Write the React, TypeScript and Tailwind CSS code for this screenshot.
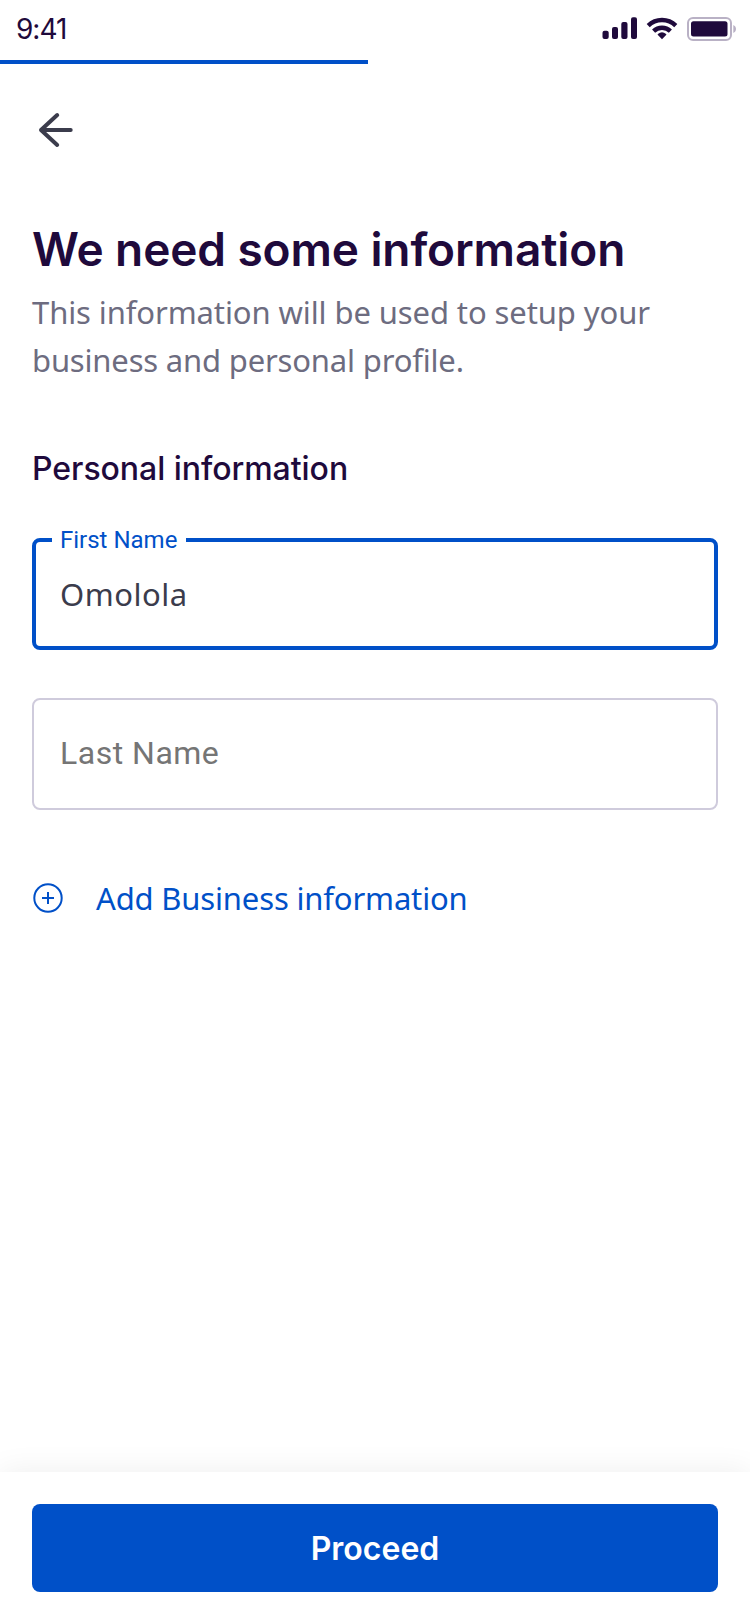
function StatusIcons() {
  return (
    <svg width="160" height="60" viewBox="590 0 160 60" fill="#1f0a3c">
      <rect x="602.5" y="30.8" width="6.2" height="8.2" rx="2" />
      <rect x="612" y="27" width="6" height="12" rx="2" />
      <rect x="621.3" y="22" width="6.2" height="17" rx="2" />
      <rect x="631" y="17.3" width="6" height="21.7" rx="2" />
      <g fill="none" stroke="#1f0a3c" strokeWidth="4.4">
        <path d="M648.2 25.6a19.9 19.9 0 0 1 27.6 0" />
        <path d="M653.6 31.2a12.1 12.1 0 0 1 16.8 0" />
      </g>
      <path d="M662 39.3l-4.1-4.2c-.4-.4-.4-.9 0-1.2a6.3 6.3 0 0 1 8.2 0c.4.3.4.8 0 1.2z" />
      <rect x="688" y="18" width="43" height="22" rx="5" fill="none" stroke="#b9b1c5" strokeWidth="2" />
      <rect x="691" y="21.3" width="36.5" height="15.2" rx="2.5" />
      <path d="M733.3 25v8c1.6-.7 2.7-2.2 2.7-4s-1.1-3.300-2.700-4z" fill="#b9b1c5" />
    </svg>
  );
}

export default function App() {
  return (
    <div className="flex h-[1624px] w-[750px] flex-col overflow-hidden bg-white font-['Inter',sans-serif] text-[#1f0a3c]">
      <header className="flex h-[60px] items-center justify-between pl-4">
        <span className="pb-[2px] text-[28px] leading-none tracking-[-1px]">9:41</span>
        <StatusIcons />
      </header>
      <div className="h-1 w-[368px] bg-[#0050c8]" />

      <main className="flex flex-1 flex-col px-8">
        <button className="mt-[42px] h-12 w-12" aria-label="Back">
          <svg width="48" height="48" viewBox="0 0 48 48" fill="none" stroke="#3b3c4c" strokeWidth="4" strokeLinecap="round" strokeLinejoin="round">
            <path d="M38.700 24H9M25.200 9L9 24l16.200 15" />
          </svg>
        </button>

        <h1 className="mt-[63px] whitespace-nowrap text-[46px] font-semibold leading-[64px] tracking-[-0.1px]">We need some information</h1>
        <p className="mt-[7px] whitespace-nowrap font-['Noto_Sans',sans-serif] text-[31px] leading-[48px] tracking-[-0.1px] text-[#6d6c80]">
          This information will be used to setup your
          <br />
          <span className="tracking-[-0.18px]">business and personal profile.</span>
        </p>

        <h2 className="mt-[65px] text-[32px] font-medium leading-[40px] tracking-[-0.04px]">Personal information</h2>

        <div className="relative mt-[49px] flex h-28 items-center rounded-lg border-4 border-[#0050c8] pl-6">
          <span className="absolute -top-[18px] left-4 flex h-8 w-[134px] items-center bg-white pl-2 font-['Roboto',sans-serif] text-[24px] leading-8 text-[#0050c8]">
            First Name
          </span>
          <span className="font-['Noto_Sans',sans-serif] text-[31px] leading-[48px] tracking-[0.5px] text-[#3b3c4c]">Omolola</span>
        </div>

        <div className="mt-12 flex h-28 items-center rounded-lg border-2 border-[#cfcbdc] pb-[2px] pl-[26px]">
          <span className="font-['Roboto',sans-serif] text-[32px] leading-[48px] tracking-[0.5px] text-[#757575]">Last Name</span>
        </div>

        <button className="mt-16 flex h-12 items-center gap-8 text-[#0050c8]">
          <svg width="32" height="32" viewBox="0 0 32 32" fill="none" stroke="currentColor" strokeWidth="2">
            <circle cx="16" cy="16" r="13.700" />
            <path d="M16 10v12M10 16h12" />
          </svg>
          <span className="whitespace-nowrap font-['Noto_Sans',sans-serif] text-[31px] leading-[48px] tracking-[-0.16px]">Add Business information</span>
        </button>
      </main>

      <footer className="h-[152px] bg-white px-8 pt-8 shadow-[0_0_30px_rgba(0,0,0,0.07)]">
        <button className="flex h-[88px] w-full items-center justify-center rounded-lg bg-[#0050c8] pt-[2px] text-[32px] font-semibold leading-[48px] text-white">Proceed</button>
      </footer>
    </div>
  );
}
